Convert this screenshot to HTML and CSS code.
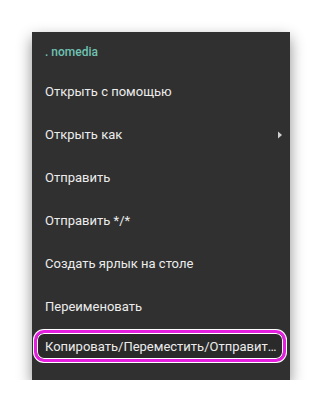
FILE: index.html
```html
<!DOCTYPE html>
<html lang="ru">
<head>
    <meta charset="UTF-8">
    <meta name="viewport" content="width=device-width, initial-scale=1.0">
    <title>Меню файла</title>
    <link rel="stylesheet" href="styles.css">
</head>
<body>

<!-- Контекстное меню -->
<div class="menu">
    <div class="menu-title">. nomedia</div>
    <div class="menu-item">Открыть с помощью</div>
    <div class="menu-item">Открыть как
        <svg class="arrow" width="6" height="8" viewBox="0 0 6 8"><path d="M1 0.5 L5 4 L1 7.5 Z" fill="#cfcfcf"/></svg>
    </div>
    <div class="menu-item">Отправить</div>
    <div class="menu-item">Отправить */*</div>
    <div class="menu-item">Создать ярлык на столе</div>
    <div class="menu-item">Переименовать</div>
    <div class="menu-item marked">Копировать/Переместить/Отправит…</div>
</div>

</body>
</html>
```

FILE: styles.css
```css
body {
    font-family: Roboto, "Liberation Sans", sans-serif;
    margin: 0;
    padding: 0;
    background-color: #ffffff;
}
.menu {
    width: 258px;
    height: 348px;
    margin: 32px 0 0 32px;
    background-color: #303030;
    box-shadow: 0 6px 14px rgba(0, 0, 0, 0.45);
    box-sizing: border-box;
}
.menu-title {
    height: 38px;
    display: flex;
    align-items: center;
    padding-left: 13px;
    padding-top: 2px;
    box-sizing: border-box;
    font-size: 12px;
    font-weight: 500;
    color: #6fc3b4;
}
.menu-item {
    height: 43px;
    display: flex;
    align-items: center;
    justify-content: space-between;
    padding: 0 7px 0 13px;
    font-size: 13px;
    color: #ececec;
    white-space: nowrap;
}
.arrow {
    display: block;
}
.menu-item.marked {
    height: 32px;
    margin: 2px 4px 0 2px;
    padding-left: 8px;
    border: 3px solid #e51ee0;
    border-radius: 10px;
    box-shadow: 0 0 0 1px #ffffff, inset 0 0 0 1px #ffffff;
    box-sizing: border-box;
    background-color: #2a2a2a;
}
```
